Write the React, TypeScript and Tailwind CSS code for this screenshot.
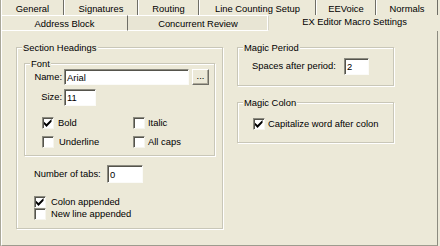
import type { ReactNode } from "react";

function Check({ checked }: { checked?: boolean }) {
  return (
    <span className="flex h-[12px] w-[12px] shrink-0 items-center justify-center border border-t-[#8c8b80] border-l-[#8c8b80] border-b-[#f6f5ee] border-r-[#f6f5ee] bg-white shadow-[inset_1px_1px_0_#55544c]">
      {checked && (
        <svg width="8" height="8" viewBox="0 0 7 7">
          <path d="M0 2.3 L2.2 4.4 L6.6 0 L6.6 2.5 L2.2 6.9 L0 4.7 Z" fill="#000" />
        </svg>
      )}
    </span>
  );
}

function TextBox({ value, className }: { value: string; className: string }) {
  return (
    <div
      className={`flex items-center border border-t-[#8c8b80] border-l-[#8c8b80] border-b-[#fbfbf8] border-r-[#fbfbf8] bg-white pl-[2px] leading-[11px] shadow-[inset_1px_1px_0_#55544c] ${className}`}
    >
      {value}
    </div>
  );
}

function Group({ title, className, children }: { title: string; className: string; children: ReactNode }) {
  return (
    <div
      className={`border border-[#c9c7b8] shadow-[1px_1px_0_#fff,inset_1px_1px_0_#fff] ${className}`}
    >
      <span className="-mt-[6px] ml-[5px] block w-fit bg-[#ece9d8] px-[1px] leading-[11px]">{title}</span>
      {children}
    </div>
  );
}

const topTabs = [
  { label: "General", w: "w-[63px]" },
  { label: "Signatures", w: "w-[74px]" },
  { label: "Routing", w: "w-[61px]" },
  { label: "Line Counting Setup", w: "w-[117px]" },
  { label: "EEVoice", w: "w-[60px]" },
  { label: "Normals", w: "w-[62px]" },
];

export default function App() {
  return (
    <div className="flex h-[246px] w-[440px] flex-col overflow-hidden border-l border-[#a9a799] bg-[#ece9d8] font-['Liberation_Sans',Arial,sans-serif] text-[9.4px] text-black">
      {/* Back row of tabs */}
      <div className="flex h-[15px] shrink-0">
        {topTabs.map((t, i) => (
          <div
            key={t.label}
            className={`${t.w} flex justify-center border-r border-r-[#6f6e66] pt-[3px] leading-[11px] ${i > 0 ? "border-l border-l-white" : "border-l border-l-white"}`}
          >
            {t.label}
          </div>
        ))}
      </div>

      {/* Front row of tabs */}
      <div className="flex h-[16px] shrink-0">
        <div className="flex w-[127px] justify-center border-t border-b border-r border-white border-r-[#6f6e66] border-l border-l-white pt-[2px] leading-[11px]">
          Address Block
        </div>
        <div className="flex w-[141px] justify-center border-t border-b border-white border-r border-r-[#d8d6c8] bg-[#e8e5d4] pt-[2px] leading-[11px] shadow-[inset_-1px_0_0_#fff]">
          Concurrent Review
        </div>
        <div className="flex flex-1 justify-center pt-[1px] leading-[11px]">EX Editor Macro Settings</div>
      </div>

      {/* Page */}
      <div className="mr-[2px] flex flex-1 items-start border-b border-r border-l border-b-[#9d9b8e] border-r-[#8c8b80] border-l-white pt-[16px] pl-[14px]">
        <Group title="Section Headings" className="w-[207px] pb-[8px]">
          <Group title="Font" className="mt-[10px] ml-[7px] w-[191px] pb-[7px]">
            <div className="flex h-[16px] items-center">
              <span className="w-[37px] text-right">Name:</span>
              <TextBox value="Arial" className="ml-[2px] h-[16px] w-[125px]" />
              <div className="ml-[3px] flex h-[16px] w-[17px] items-center justify-center border border-t-white border-l-white border-b-[#6f6e66] border-r-[#6f6e66] pb-[3px] leading-[11px] shadow-[inset_-1px_-1px_0_#aca899]">
                ...
              </div>
            </div>
            <div className="mt-[4px] flex h-[17px] items-center">
              <span className="w-[37px] text-right">Size:</span>
              <TextBox value="11" className="ml-[2px] h-[17px] w-[32px]" />
            </div>
            <div className="mt-[11px] ml-[17px] grid grid-cols-[91px_1fr] gap-y-[7px]">
              <div className="flex h-[12px] items-center gap-[4px]">
                <Check checked />
                <span>Bold</span>
              </div>
              <div className="flex h-[12px] items-center gap-[3px]">
                <Check />
                <span>Italic</span>
              </div>
              <div className="flex h-[12px] items-center gap-[5px]">
                <Check />
                <span>Underline</span>
              </div>
              <div className="flex h-[12px] items-center gap-[3px]">
                <Check />
                <span>All caps</span>
              </div>
            </div>
          </Group>

          <div className="mt-[9px] ml-[17px] flex h-[18px] items-center">
            <span className="w-[73px]">Number of tabs:</span>
            <TextBox value="0" className="h-[18px] w-[36px]" />
          </div>
          <div className="mt-[13px] ml-[17px] flex h-[12px] items-center gap-[5px]">
            <Check checked />
            <span>Colon appended</span>
          </div>
          <div className="ml-[17px] flex h-[12px] items-center gap-[5px]">
            <Check />
            <span>New line appended</span>
          </div>
        </Group>

        <div className="ml-[14px] flex w-[157px] flex-col">
          <Group title="Magic Period" className="pb-[10px]">
            <div className="mt-[5px] flex h-[17px] items-center pl-[14px]">
              <span className="w-[92px]">Spaces after period:</span>
              <TextBox value="2" className="h-[17px] w-[25px]" />
            </div>
          </Group>
          <Group title="Magic Colon" className="mt-[16px] pb-[12px]">
            <div className="mt-[10px] flex h-[12px] items-center gap-[3px] pl-[15px]">
              <Check checked />
              <span>Capitalize word after colon</span>
            </div>
          </Group>
        </div>
      </div>
    </div>
  );
}
